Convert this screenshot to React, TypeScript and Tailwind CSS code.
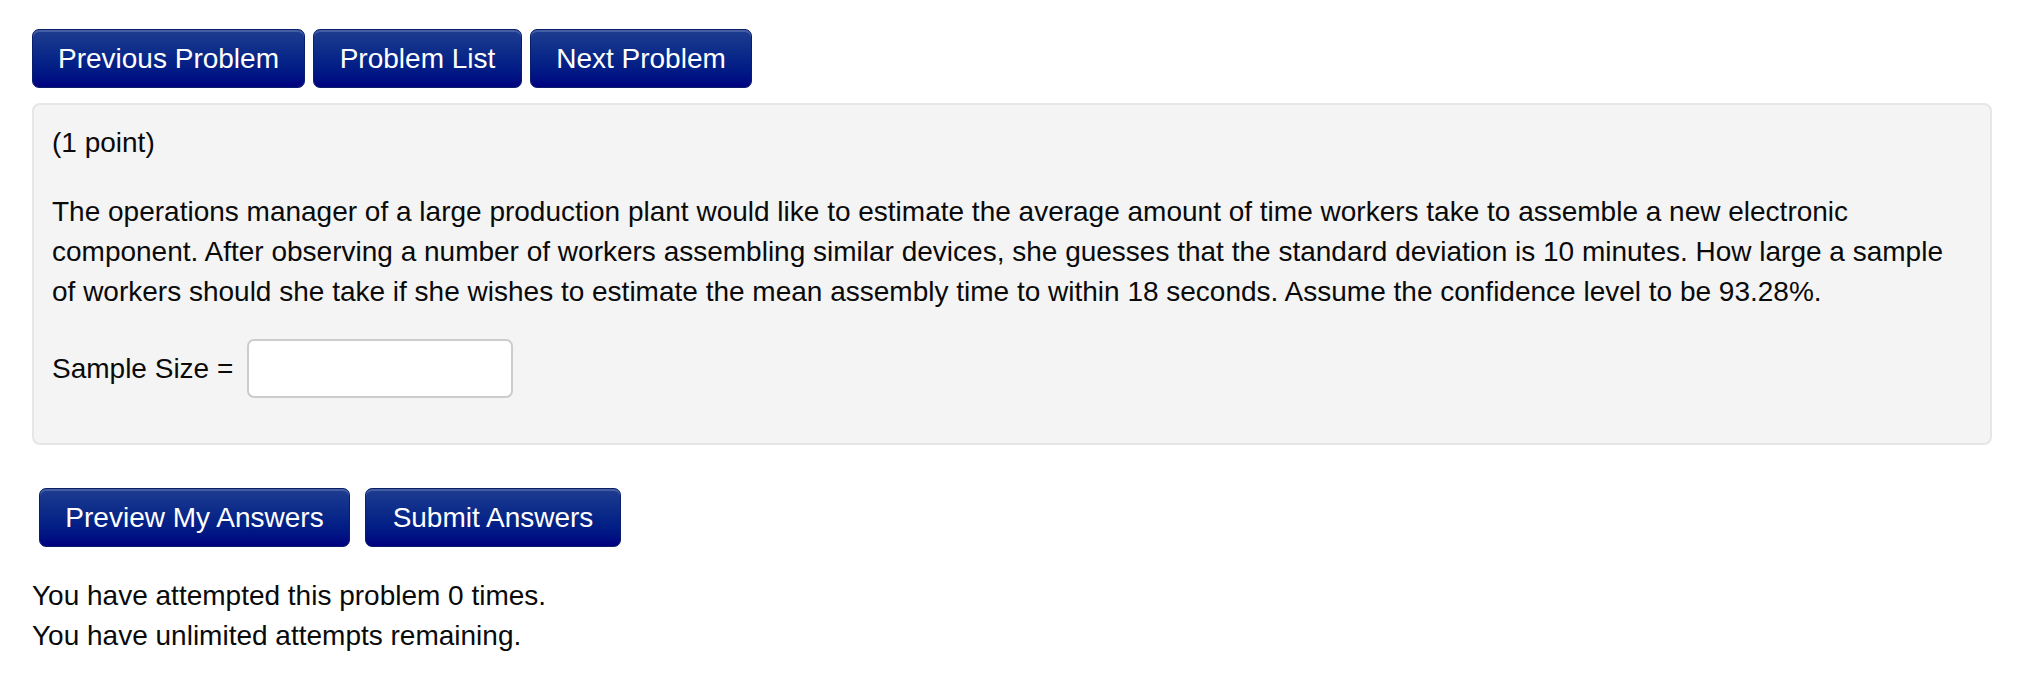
import React from 'react';

const btn =
  'h-[59px] rounded-[7px] border border-[#0a1f6b] bg-gradient-to-b from-[#1e3c8f] to-[#000080] text-white text-[28px] leading-[40px] shadow-[inset_0_2px_0_rgba(255,255,255,0.18)]';

export default function App() {
  return (
    <div className="min-h-[682px] bg-white text-[#0a0a0a] font-['Liberation_Sans',Arial,sans-serif] text-[28px] leading-[40px]">
      <div className="pl-[32px] pr-[34px] pt-[29px]">
        {/* Navigation */}
        <div className="flex gap-[8px]">
          <button className={`${btn} w-[273px]`}>Previous Problem</button>
          <button className={`${btn} w-[209px]`}>Problem List</button>
          <button className={`${btn} w-[222px]`}>Next Problem</button>
        </div>

        {/* Problem panel */}
        <div className="mt-[15px] h-[342px] rounded-[8px] border-2 border-[#e6e6e6] bg-[#f4f4f4] px-[18px] pt-[18px]">
          <p>(1 point)</p>
          <p className="mt-[29px]">
            The operations manager of a large production plant would like to estimate the average amount of time workers
            take to assemble a new electronic component. After observing a number of workers assembling similar devices,
            she guesses that the standard deviation is 10 minutes. How large a sample of workers should she take if she
            wishes to estimate the mean assembly time to within 18 seconds. Assume the confidence level to be 93.28%.
          </p>
          <div className="mt-[27px] flex items-center gap-[14px]">
            <span>Sample Size =</span>
            <input
              type="text"
              className="h-[59px] w-[266px] rounded-[7px] border-2 border-[#cccccc] bg-white px-[10px] outline-none"
            />
          </div>
        </div>

        {/* Submit */}
        <div className="mt-[43px] flex gap-[15px] pl-[7px]">
          <button className={`${btn} w-[311px]`}>Preview My Answers</button>
          <button className={`${btn} w-[256px]`}>Submit Answers</button>
        </div>

        <div className="mt-[29px]">
          <p>You have attempted this problem 0 times.</p>
          <p>You have unlimited attempts remaining.</p>
        </div>
      </div>
    </div>
  );
}
